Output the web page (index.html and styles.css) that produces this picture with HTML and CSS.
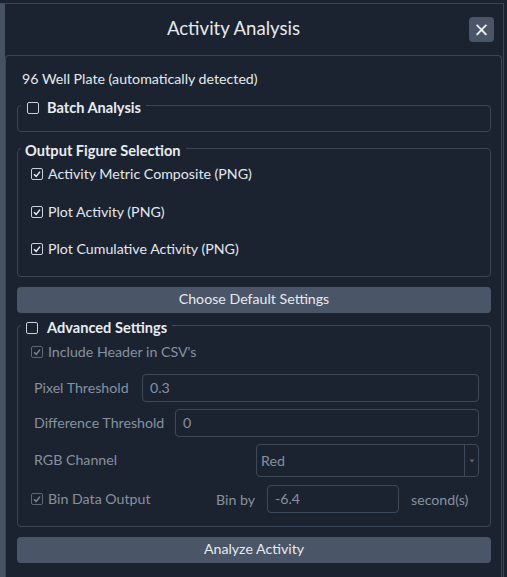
FILE: index.html
```html
<!DOCTYPE html>
<html>
<head>
<meta charset="utf-8">
<link rel="stylesheet" href="styles.css">
</head>
<body>
<div class="window">
  <div class="dialog">
    <div class="header">
      <div class="title">Activity Analysis</div>
      <button class="close">&times;</button>
    </div>
    <div class="content">
      <div class="plate">96 Well Plate (automatically detected)</div>

      <fieldset class="group batch">
        <legend class="lg-batch"><span class="cb"></span><b>Batch Analysis</b></legend>
      </fieldset>

      <fieldset class="group outputs">
        <legend class="lg-plain"><b>Output Figure Selection</b></legend>
        <div class="inner">
          <label class="check"><span class="cb"><svg viewBox="0 0 10 10"><path d="M2 5.2 L4.2 7.4 L8 2.6" /></svg></span>Activity Metric Composite (PNG)</label>
          <label class="check"><span class="cb"><svg viewBox="0 0 10 10"><path d="M2 5.2 L4.2 7.4 L8 2.6" /></svg></span>Plot Activity (PNG)</label>
          <label class="check"><span class="cb"><svg viewBox="0 0 10 10"><path d="M2 5.2 L4.2 7.4 L8 2.6" /></svg></span>Plot Cumulative Activity (PNG)</label>
        </div>
      </fieldset>

      <button class="wide defaults">Choose Default Settings</button>

      <fieldset class="group advanced">
        <legend class="lg-adv"><span class="cb"></span><b>Advanced Settings</b></legend>
        <div class="inner">
          <label class="check dis hdr"><span class="cb"><svg viewBox="0 0 10 10"><path d="M2 5.2 L4.2 7.4 L8 2.6" /></svg></span>Include Header in CSV's</label>
          <div class="row pixel"><span class="lbl">Pixel Threshold</span><div class="field">0.3</div></div>
          <div class="row diff"><span class="lbl">Difference Threshold</span><div class="field">0</div></div>
          <div class="row rgb"><span class="lbl">RGB Channel</span><div class="select"><span class="val">Red</span><span class="arrow"><svg viewBox="0 0 6 4"><path d="M0.5 0.5 L3 3.5 L5.5 0.5 Z"/></svg></span></div></div>
          <div class="row bin">
            <label class="check dis"><span class="cb"><svg viewBox="0 0 10 10"><path d="M2 5.2 L4.2 7.4 L8 2.6" /></svg></span>Bin Data Output</label>
            <span class="binby">Bin by</span>
            <div class="field small">-6.4</div>
            <span class="unit">second(s)</span>
          </div>
        </div>
      </fieldset>

      <button class="wide analyze">Analyze Activity</button>
    </div>
  </div>
</div>
</body>
</html>
```

FILE: styles.css
```css
html, body {
  margin: 0;
  padding: 0;
  background: #1b2330;
  width: 507px;
  height: 577px;
  overflow: hidden;
}
body {
  font-family: "Lato", "Noto Sans", sans-serif;
  color: #e2e8f0;
  font-size: 14.2px;
}
.window {
  padding-top: 3px;
}
.dialog {
  border-top: 1px solid #3b4656;
  border-left: 5px solid #465263;
  border-right: 1px solid #3b4656;
  width: 498px;
  height: 573px;
  background: #1b2330;
}
.header {
  height: 51px;
  display: flex;
  align-items: center;
}
.title {
  flex: 1;
  text-align: center;
  font-size: 18.6px;
  line-height: 24px;
  color: #e5e9ef;
  margin-top: -3px;
}
.close {
  margin-left: 7px;
  margin-right: 9px;
  margin-top: -1px;
  width: 25px;
  height: 25px;
  border: none;
  border-radius: 4px;
  background: #4a5567;
  color: #f1f4f8;
  font-size: 19px;
  line-height: 25px;
  padding: 0;
  font-family: "DejaVu Sans", sans-serif;
}
.content {
  border: 1px solid #3b4656;
  border-bottom: none;
  border-radius: 4px 4px 0 0;
  margin-right: 1px;
  height: 522px;
  padding: 0 10px 0 11px;
  box-sizing: border-box;
}
.plate {
  padding-top: 14px;
  padding-left: 5px;
  line-height: 18px;
  height: 18px;
  color: #e5e9ef;
}
.group {
  border: 1px solid #3b4656;
  border-radius: 4px;
  margin: 0;
  padding: 0;
  min-width: 0;
  box-sizing: border-box;
}
legend {
  display: flex;
  align-items: center;
  margin-left: 3px;
  padding-top: 5px;
  padding-bottom: 0;
  height: 18px;
  line-height: 18px;
  box-sizing: content-box;
  font-size: 14.6px;
}
legend b {
  font-weight: 700;
  color: #e8ecf1;
}
.lg-batch {
  padding-left: 6px;
  padding-right: 5px;
}
.lg-batch .cb {
  margin-right: 8px;
}
.lg-plain {
  padding-left: 4px;
  padding-right: 5px;
}
.lg-adv {
  padding-left: 5px;
  padding-right: 5px;
}
.lg-adv .cb {
  margin-right: 9px;
}
.batch {
  margin-top: 6px;
  height: 38px;
}
.outputs {
  margin-top: 5px;
  height: 140px;
}
.inner {
  padding-left: 13px;
  padding-right: 11px;
}
.outputs .inner {
  padding-top: 5px;
}
.cb {
  display: inline-flex;
  flex: none;
  width: 10px;
  height: 10px;
  border: 1px solid #c9d1dc;
  border-radius: 2px;
  box-sizing: content-box;
  align-items: center;
  justify-content: center;
}
.cb svg {
  width: 10px;
  height: 10px;
}
.cb svg path {
  fill: none;
  stroke: #e8ecf1;
  stroke-width: 1.5;
}
.check {
  display: flex;
  align-items: center;
  height: 18px;
  line-height: 18px;
  color: #e2e8f0;
}
.check .cb {
  margin-right: 5px;
}
.outputs .check + .check {
  margin-top: 19.5px;
}
.wide {
  display: block;
  width: 474px;
  height: 26px;
  border: none;
  border-radius: 4px;
  background: #4a5567;
  color: #e6eaf0;
  font-family: inherit;
  font-size: 14.2px;
  line-height: 24px;
  padding: 0 0 2px 0;
}
.defaults {
  margin-top: 10px;
}
.advanced {
  margin-top: 1px;
  height: 213px;
}
.advanced .inner {
  padding-top: 6px;
}
.dis {
  color: #8791a0;
}
.dis .cb {
  border-color: #5d6777;
}
.dis .cb svg path {
  stroke: #7c8696;
}
.row {
  display: flex;
  align-items: center;
}
.lbl {
  color: #8791a0;
  padding-left: 3px;
  padding-bottom: 2px;
  box-sizing: border-box;
  flex: none;
}
.field, .select {
  border: 1px solid #3d4859;
  border-radius: 4px;
  box-sizing: border-box;
  height: 28px;
  display: flex;
  align-items: center;
  padding-left: 7px;
  padding-bottom: 1px;
  color: #8791a0;
}
.pixel {
  margin-top: 13px;
}
.pixel .lbl {
  width: 111px;
}
.pixel .field, .diff .field {
  flex: 1;
}
.diff {
  margin-top: 7px;
}
.diff .lbl {
  width: 144px;
}
.rgb {
  margin-top: 7px;
}
.rgb .lbl {
  width: 225px;
}
.select {
  flex: 1;
  height: 33px;
  padding-left: 4px;
  padding-bottom: 0;
}
.select .val {
  flex: 1;
  padding-bottom: 1px;
}
.select .arrow {
  width: 13px;
  height: 31px;
  border-left: 1px solid #3d4859;
  display: flex;
  align-items: center;
  justify-content: center;
}
.arrow svg {
  width: 6px;
  height: 4px;
}
.arrow path {
  fill: #5f6979;
}
.bin {
  margin-top: 8px;
}
.bin .check {
  width: 185px;
  flex: none;
}
.binby {
  color: #8791a0;
  width: 51px;
  flex: none;
}
.field.small {
  width: 132px;
  flex: none;
}
.unit {
  margin-left: 12px;
  color: #8791a0;
}
.analyze {
  margin-top: 10px;
}
```
